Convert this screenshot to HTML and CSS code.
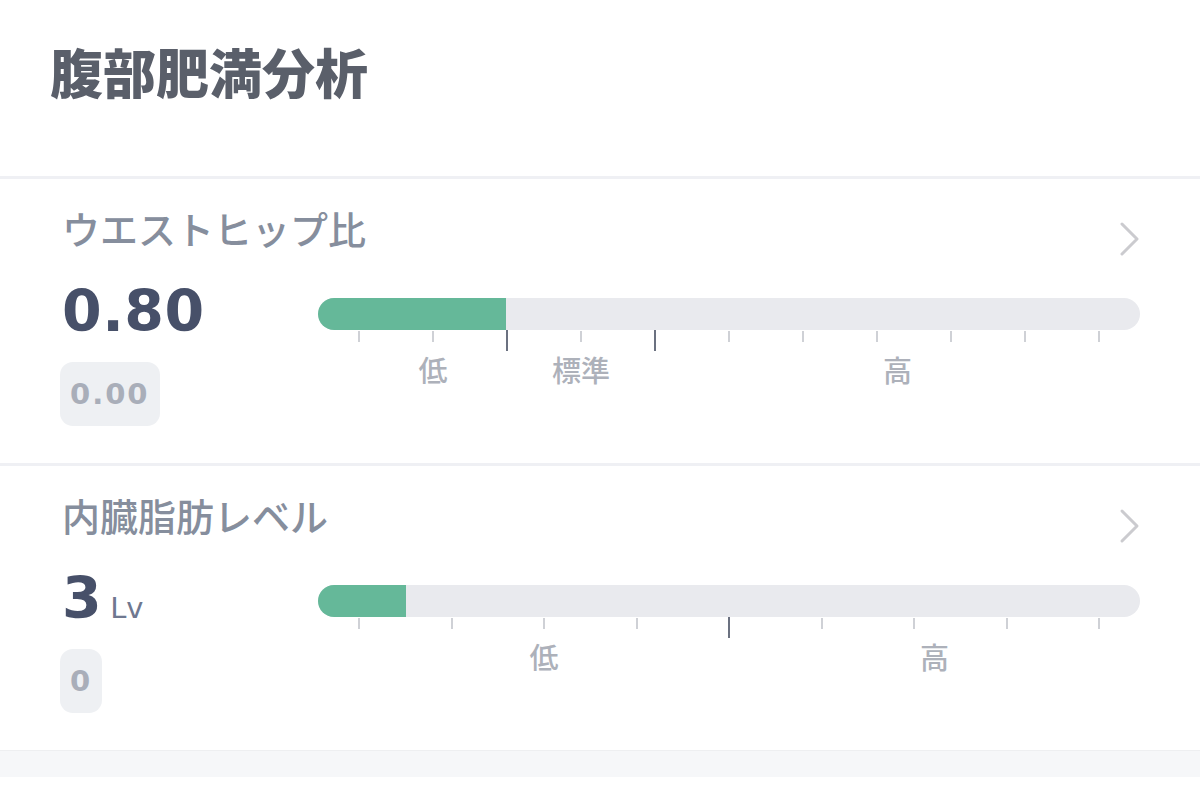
FILE: index.html
```html
<!DOCTYPE html>
<html lang="ja">
<head>
<meta charset="utf-8">
<title>腹部肥満分析</title>
<link rel="stylesheet" href="styles.css">
</head>
<body>
<div class="page">
  <header class="header">
    <h1 class="title">腹部肥満分析</h1>
  </header>

  <section class="metric">
    <div class="metric-head">
      <h2 class="metric-label">ウエストヒップ比</h2>
      <svg class="chevron" width="22" height="36" viewBox="0 0 22 36"><polyline points="3,3 18,18 3,33" fill="none" stroke="#cbcbcf" stroke-width="3" stroke-linecap="round" stroke-linejoin="round"/></svg>
    </div>
    <div class="metric-body">
      <div class="metric-left">
        <div class="value">0.80</div>
        <div class="badge">0.00</div>
      </div>
      <div class="gauge">
        <div class="bar"><div class="fill" style="width:22.9%"></div></div>
        <div class="ticks">
          <span class="tick"></span><span class="tick"></span><span class="tick major"></span><span class="tick"></span><span class="tick major"></span><span class="tick"></span><span class="tick"></span><span class="tick"></span><span class="tick"></span><span class="tick"></span><span class="tick"></span>
        </div>
        <div class="scale scale-whr">
          <span>低</span><span>標準</span><span>高</span>
        </div>
      </div>
    </div>
  </section>

  <section class="metric">
    <div class="metric-head">
      <h2 class="metric-label">内臓脂肪レベル</h2>
      <svg class="chevron" width="22" height="36" viewBox="0 0 22 36"><polyline points="3,3 18,18 3,33" fill="none" stroke="#cbcbcf" stroke-width="3" stroke-linecap="round" stroke-linejoin="round"/></svg>
    </div>
    <div class="metric-body">
      <div class="metric-left">
        <div class="value">3<span class="unit">Lv</span></div>
        <div class="badge">0</div>
      </div>
      <div class="gauge">
        <div class="bar"><div class="fill" style="width:10.7%"></div></div>
        <div class="ticks">
          <span class="tick"></span><span class="tick"></span><span class="tick"></span><span class="tick"></span><span class="tick major"></span><span class="tick"></span><span class="tick"></span><span class="tick"></span><span class="tick"></span>
        </div>
        <div class="scale scale-vfl">
          <span>低</span><span>高</span>
        </div>
      </div>
    </div>
  </section>

  <div class="footer-band"></div>
</div>
</body>
</html>
```

FILE: styles.css
```css
* { box-sizing: border-box; }

html, body {
  margin: 0;
  padding: 0;
  background: #ffffff;
}

body {
  font-family: "Noto Sans CJK JP", "Noto Sans", sans-serif;
  width: 1200px;
  height: 796px;
  overflow: hidden;
}

.header {
  height: 179px;
  padding: 45px 0 0 50px;
  border-bottom: 3px solid #eff0f4;
}

.title {
  margin: 0;
  font-size: 53px;
  line-height: 53px;
  font-weight: 900;
  color: #5a5f6a;
  letter-spacing: 0;
}

.metric {
  padding: 26px 60px 37px 62px;
  border-bottom: 3px solid #eff0f4;
}

.metric-head {
  display: flex;
  justify-content: space-between;
  align-items: flex-start;
  height: 46px;
}

.metric-label {
  margin: 0;
  font-size: 38px;
  line-height: 46px;
  font-weight: 500;
  color: #868e9d;
}

.chevron {
  display: block;
  margin-top: 16px;
  margin-right: -1px;
}

.metric-body {
  margin-top: 32px;
  display: grid;
  grid-template-columns: 256px 1fr;
}

.metric-left {
  display: flex;
  flex-direction: column;
  align-items: flex-start;
}

.value {
  font-family: "DejaVu Sans", "Liberation Sans", sans-serif;
  font-weight: 700;
  font-size: 57px;
  line-height: 57px;
  height: 57px;
  color: #475069;
  letter-spacing: 0.5px;
}

.unit {
  font-family: "DejaVu Sans", "Liberation Sans", sans-serif;
  font-weight: 400;
  font-size: 29px;
  line-height: 0;
  color: #6f7890;
  margin-left: 8px;
  letter-spacing: 0;
}

.badge {
  margin-top: 22px;
  margin-left: -2px;
  height: 64px;
  padding: 0 10px;
  border-radius: 13px;
  background: #eef0f3;
  font-family: "DejaVu Sans", "Liberation Sans", sans-serif;
  font-weight: 700;
  font-size: 29px;
  line-height: 64px;
  letter-spacing: 2px;
  color: #a9aeb9;
}

.gauge {
  padding-top: 15px;
}

.bar {
  height: 32px;
  border-radius: 16px;
  background: #e9eaee;
  overflow: hidden;
}

.fill {
  height: 100%;
  background: #65b899;
}

.ticks {
  display: flex;
  justify-content: space-between;
  align-items: flex-start;
  padding: 0 40px 0 40px;
  height: 22px;
}

.tick {
  width: 2px;
  height: 11px;
  margin-top: 1px;
  background: #cfd1d6;
}

.tick.major {
  height: 21px;
  margin-top: 0;
  background: #6b7180;
}

.scale {
  display: grid;
  padding-left: 41px;
  font-size: 29px;
  line-height: 34px;
  font-weight: 500;
  color: #adb1ba;
  text-align: center;
}

.scale-whr {
  grid-template-columns: 2fr 2fr 6.55fr;
}

.scale-vfl {
  grid-template-columns: 4fr 4.44fr;
}

.footer-band {
  height: 27px;
  background: #f6f7f9;
  border-top: 1px solid #eeeff1;
  margin-top: -3px;
}
```
